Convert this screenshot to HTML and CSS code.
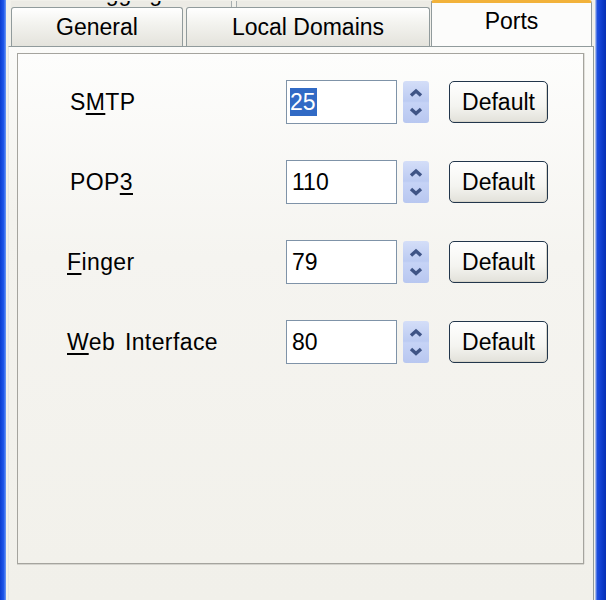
FILE: index.html
```html
<!DOCTYPE html>
<html lang="en">
<head>
    <meta charset="UTF-8">
    <title>Ports</title>
    <link rel="stylesheet" href="styles.css">
</head>
<body>
    <div class="window">
        <div class="edge-left"></div>
        <div class="client">
            <div class="tabbar">
                <div class="tab-rows">
                    <div class="back-row">
                        <div class="back-tab first"><span>Logging</span></div>
                        <div class="back-tab second"></div>
                    </div>
                    <div class="front-row">
                        <div class="tab general">General</div>
                        <div class="tab domains">Local Domains</div>
                    </div>
                </div>
                <div class="tab active">Ports</div>
            </div>

            <div class="page">
                <div class="frame">
                    <div class="port-grid">
                        <label class="port-label"><span>S<u>M</u>TP</span></label>
                        <div class="port-input"><span class="selected">25</span></div>
                        <div class="spin">
                            <svg width="26" height="42" viewBox="0 0 26 42">
                                <path d="M8 14.5 L13 10 L18 14.5" />
                                <path d="M8 28 L13 32.5 L18 28" />
                            </svg>
                        </div>
                        <button class="default-btn">Default</button>

                        <label class="port-label"><span>POP<u>3</u></span></label>
                        <div class="port-input">110</div>
                        <div class="spin">
                            <svg width="26" height="42" viewBox="0 0 26 42">
                                <path d="M8 14.5 L13 10 L18 14.5" />
                                <path d="M8 28 L13 32.5 L18 28" />
                            </svg>
                        </div>
                        <button class="default-btn">Default</button>

                        <label class="port-label shift"><span><u>F</u>inger</span></label>
                        <div class="port-input">79</div>
                        <div class="spin">
                            <svg width="26" height="42" viewBox="0 0 26 42">
                                <path d="M8 14.5 L13 10 L18 14.5" />
                                <path d="M8 28 L13 32.5 L18 28" />
                            </svg>
                        </div>
                        <button class="default-btn">Default</button>

                        <label class="port-label shift"><span><u>W</u>eb Interface</span></label>
                        <div class="port-input">80</div>
                        <div class="spin">
                            <svg width="26" height="42" viewBox="0 0 26 42">
                                <path d="M8 14.5 L13 10 L18 14.5" />
                                <path d="M8 28 L13 32.5 L18 28" />
                            </svg>
                        </div>
                        <button class="default-btn">Default</button>
                    </div>
                </div>
            </div>
        </div>
        <div class="edge-right"></div>
    </div>
</body>
</html>
```

FILE: styles.css
```css
body {
    margin: 0;
    width: 606px;
    height: 600px;
    overflow: hidden;
    font-family: "Liberation Sans", Arial, sans-serif;
    font-size: 23px;
    color: #000;
    background-color: #f1f0ea;
}
.window {
    display: flex;
    height: 600px;
}
.edge-left {
    width: 6px;
    background: linear-gradient(to right, #0a3ccf, #1e56ea 60%, #6f9cf4);
}
.edge-right {
    width: 11px;
    background: linear-gradient(to right, #c9d6ee, #1d4fe0 20%, #0b39c8 70%, #0630b4);
}
.client {
    flex: 1;
    display: flex;
    flex-direction: column;
    background-color: #f1f0ea;
}

/* tabs */
.tabbar {
    display: flex;
    align-items: flex-end;
    padding-left: 5px;
}
.tab-rows {
    width: 421px;
}
.back-row {
    display: flex;
    gap: 4px;
    height: 6px;
}
.back-tab {
    height: 6px;
    overflow: hidden;
    border-left: 1px solid #a7aeb0;
    border-right: 1px solid #a7aeb0;
    background-color: #ecebe5;
    text-align: center;
    box-sizing: border-box;
}
.back-tab span {
    display: block;
    line-height: 24px;
    margin-top: -20px;
}
.back-tab.first {
    width: 221px;
    border-left: none;
}
.back-tab.second {
    flex: 1;
}
.front-row {
    display: flex;
    gap: 3px;
    height: 39px;
}
.tab {
    box-sizing: border-box;
    border: 1px solid #919b9c;
    border-bottom: none;
    border-radius: 3px 3px 0 0;
    background: linear-gradient(to bottom, #ffffff, #f3f3ef 40%, #e4e3dc);
    text-align: center;
    line-height: 38px;
}
.tab.general {
    width: 172px;
}
.tab.domains {
    width: 244px;
}
.tab.active {
    width: 161px;
    height: 46px;
    margin-left: -1px;
    border-top: 3px solid #f2b23a;
    line-height: 36px;
    background: #fcfcfb;
    position: relative;
    z-index: 1;
}

/* page */
.page {
    flex: 1;
    margin: 0 1px 0 2px;
    border-top: 1px solid #919b9c;
    border-right: 1px solid #919b9c;
    border-left: 1px solid #e6e6e2;
    padding: 6px 0 0 8px;
    background: linear-gradient(to bottom, #fbfbf9, #f3f2ed 30%, #f1f0ea);
}
.frame {
    width: 565px;
    height: 509px;
    border: 1px solid #a5a49e;
    box-shadow: 0 1px 0 #d4d3cd, 1px 0 0 #e0dfda;
    background: linear-gradient(to bottom, #fdfdfc, #f5f4f0 40%, #f2f1eb);
}
.port-grid {
    display: grid;
    grid-template-columns: 216px 111px 26px 105px;
    grid-auto-rows: 44px;
    row-gap: 36px;
    padding: 26px 0 0 52px;
    align-items: center;
}
.port-label {
    letter-spacing: 0.4px;
    word-spacing: 3px;
}
.port-label.shift {
    margin-left: -3px;
}
.port-label u {
    text-underline-offset: 3px;
}
.port-input {
    box-sizing: border-box;
    height: 44px;
    border: 1px solid #7f93a8;
    background-color: #ffffff;
    padding-left: 5px;
    line-height: 42px;
}
.selected {
    display: inline-block;
    background-color: #316ac5;
    color: #ffffff;
    line-height: 28px;
    padding: 0 1px 0 0;
    margin-left: -2px;
}
.spin {
    height: 42px;
    margin-left: 6px;
    width: 26px;
    border-radius: 3px;
    background: linear-gradient(to bottom, #d4def8, #bccbf2 48%, #c6d3f6 52%, #b8c7f0);
}
.spin svg {
    display: block;
}
.spin path {
    fill: none;
    stroke: #3f5486;
    stroke-width: 3.4;
}
.default-btn {
    margin-left: 26px;
    width: 99px;
    height: 42px;
    padding: 0;
    font-family: "Liberation Sans", Arial, sans-serif;
    font-size: 23px;
    color: #000;
    border: 1px solid #22364c;
    border-radius: 5px;
    background: linear-gradient(to bottom, #ffffff, #f4f4f0 60%, #e2e1da);
    box-shadow: inset -1px -1px 0 #d6d4ca;
}
```
